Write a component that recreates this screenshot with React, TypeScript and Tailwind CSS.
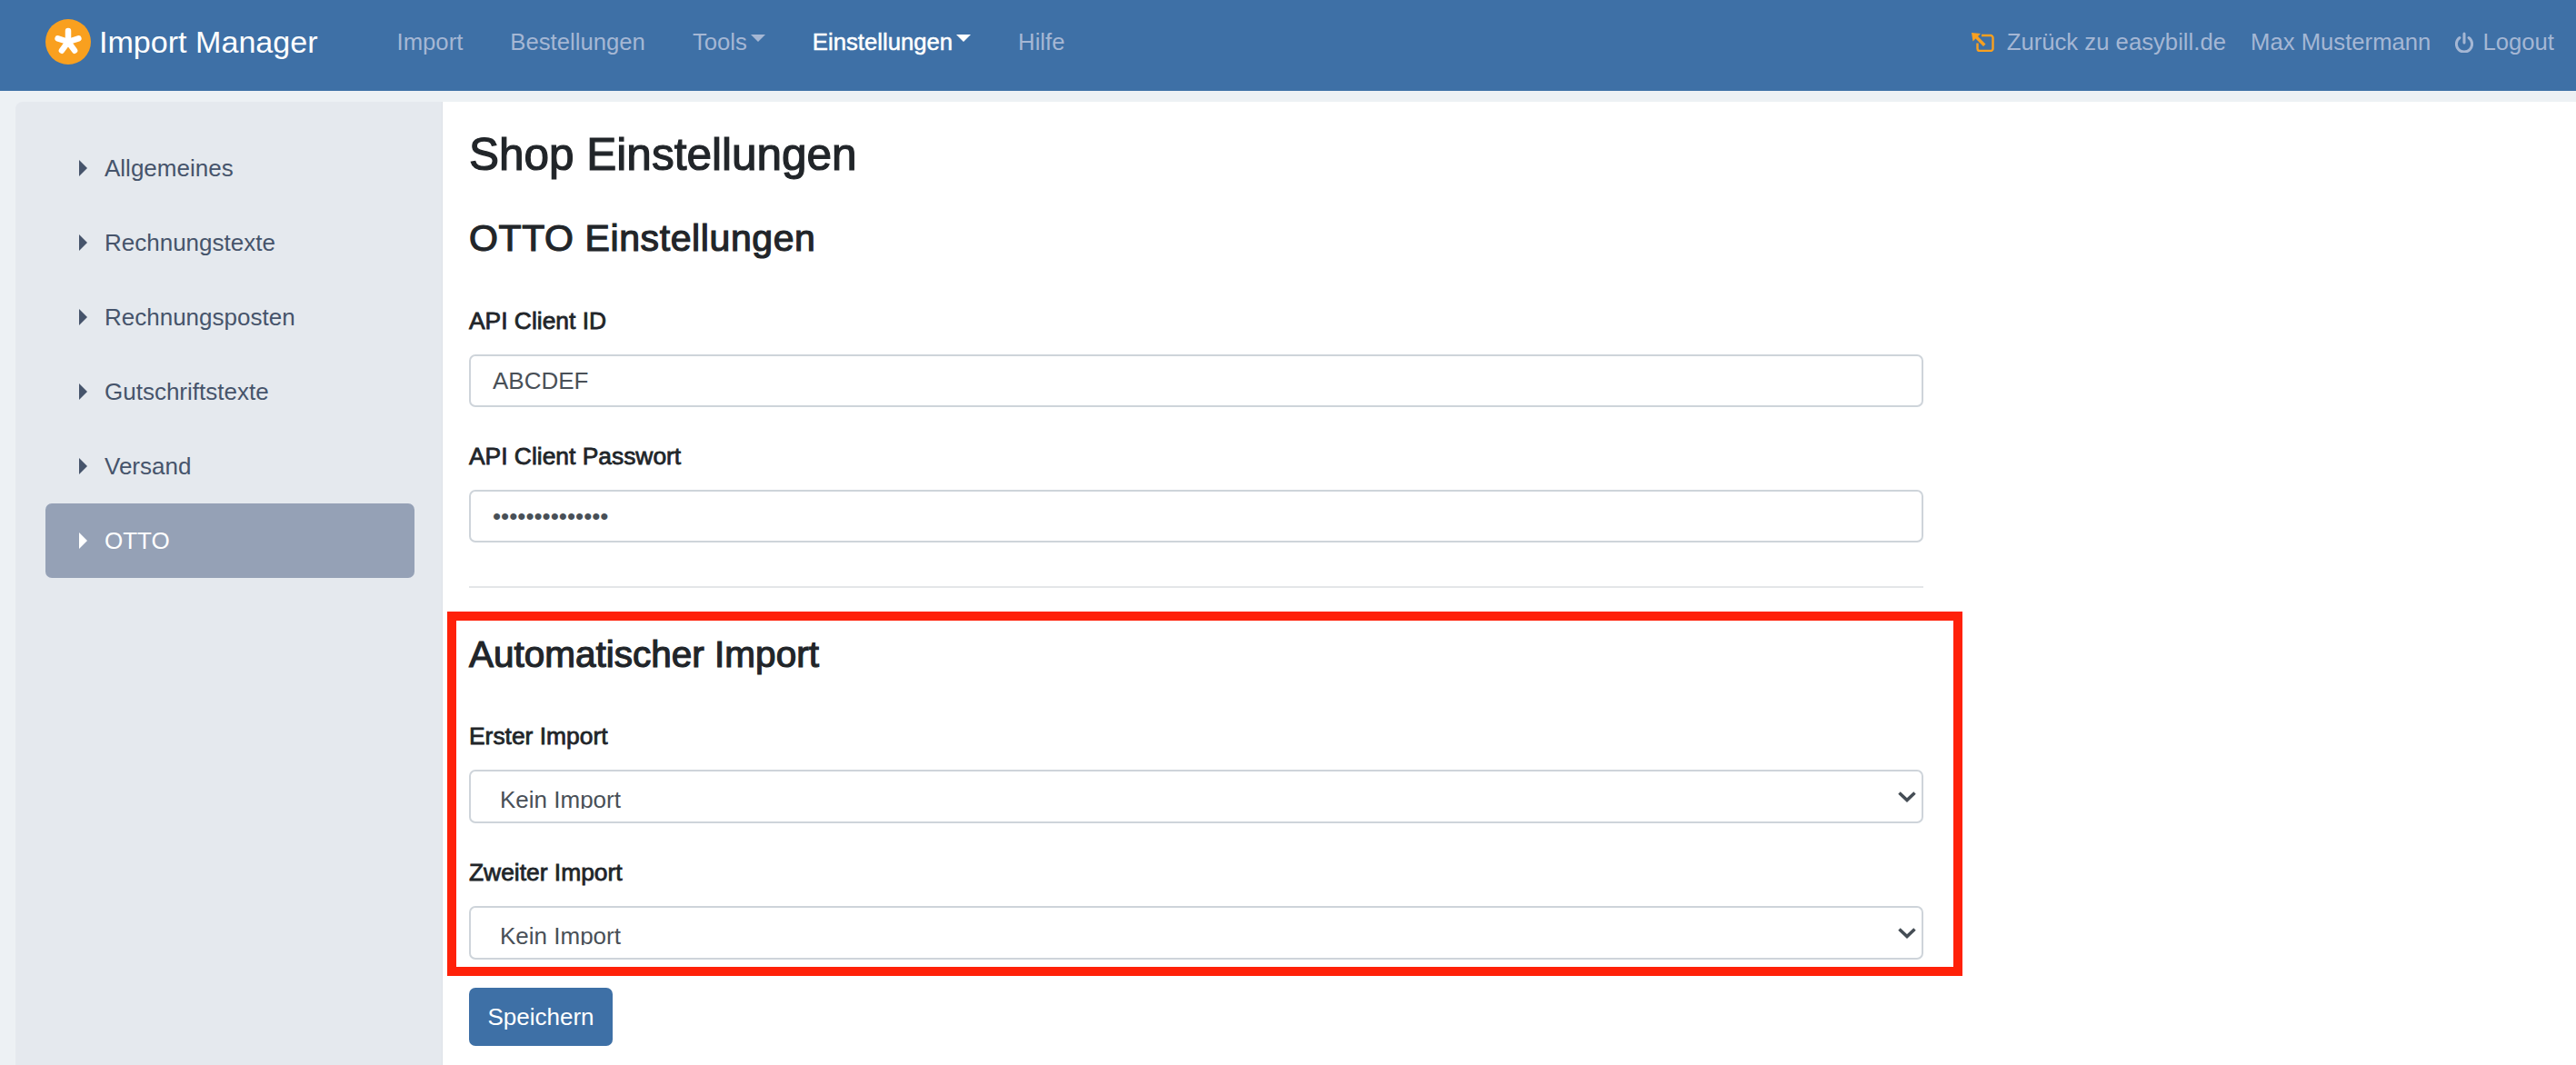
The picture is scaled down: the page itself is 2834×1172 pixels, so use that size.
const font = "font-['Liberation_Sans',Arial,sans-serif]";
const medium = "[-webkit-text-stroke:0.8px_currentColor]";
const heading = "[-webkit-text-stroke:1.2px_currentColor]";

const sideItems = ["Allgemeines", "Rechnungstexte", "Rechnungsposten", "Gutschriftstexte", "Versand", "OTTO"];

function Logo() {
  return (
    <svg viewBox="0 0 50 50" className="w-[50px] h-[50px] shrink-0">
      <circle cx="25" cy="25" r="25" fill="#f9a01f" />
      <g stroke="#fff" strokeWidth="6.5" strokeLinecap="round">
        <path d="M25 25V13" />
        <path d="M25 25V13" transform="rotate(72 25 25)" />
        <path d="M25 25V13" transform="rotate(144 25 25)" />
        <path d="M25 25V13" transform="rotate(216 25 25)" />
        <path d="M25 25V13" transform="rotate(288 25 25)" />
      </g>
    </svg>
  );
}

function BackIcon() {
  return (
    <svg viewBox="0 0 25 21" className="w-[25px] h-[21px] shrink-0" fill="none">
      <path d="M11 3h10a2.500 2.500 0 0 1 2.500 2.500v12a2.500 2.500 0 0 1-2.500 2.500H9a2.500 2.500 0 0 1-2.500-2.500v-6" stroke="#f9a01f" strokeWidth="2.400" />
      <path d="M0 0l10 1-3 3 8.500 8.500-2.500 2.500-8.500-8.500-3 3z" fill="#f9a01f" />
    </svg>
  );
}

function PowerIcon() {
  return (
    <svg viewBox="0 0 20 23" className="ml-[27px] w-[20px] h-[23px] shrink-0" fill="none" stroke="#a5b7d4" strokeWidth="3" strokeLinecap="round">
      <path d="M10 2v10" />
      <path d="M5 6.500a8.600 8.600 0 1 0 10 0" />
    </svg>
  );
}

function Caret() {
  return <span className="ml-[4px] mt-[-8px] w-0 h-0 border-x-[8px] border-x-transparent border-t-[8px] border-t-current" />;
}

function Field({ label, children, className }: { label: string; children: React.ReactNode; className?: string }) {
  return (
    <div className={className}>
      <label className={`block text-[26.4px] leading-[39px] text-[#212529] ${medium}`}>{label}</label>
      <div className="mt-[17px]">{children}</div>
    </div>
  );
}

function TextInput({ value, type = "text" }: { value: string; type?: string }) {
  return (
    <input
      readOnly
      type={type}
      value={value}
      className="block w-full h-[58px] px-[24px] text-[26px] text-[#495057] bg-white border-2 border-[#ced4da] rounded-[7px] outline-none"
    />
  );
}

function SelectBox() {
  return (
    <div className="relative">
      <select className="block w-full h-[59px] appearance-none pl-[32px] pr-[50px] pt-[12px] pb-[14px] text-[26px] text-[#495057] bg-white border-2 border-[#ced4da] rounded-[7px] outline-none">
        <option>Kein Import</option>
      </select>
      <svg viewBox="0 0 20 14" className="absolute right-[8px] top-[23px] w-[20px] h-[14px] pointer-events-none" fill="none" stroke="#454d55" strokeWidth="3.600">
        <path d="M1.500 2.500l8.500 8 8.500-8" />
      </svg>
    </div>
  );
}

export default function App() {
  return (
    <div className={`${font} h-[1172px] overflow-hidden bg-[#edf1f4] flex flex-col`}>
      <nav className="h-[100px] shrink-0 bg-[#3e70a6] flex items-center pl-[50px] pr-[24px] pb-[7px] text-[25.7px] text-[#a5b7d4]">
        <a className="flex items-center">
          <Logo />
          <span className="ml-[9px] text-[34.1px] text-white">Import Manager</span>
        </a>
        <div className="ml-[87px] flex items-center gap-[52px]">
          <a>Import</a>
          <a>Bestellungen</a>
          <a className="flex items-center">Tools<Caret /></a>
          <a className="flex items-center text-white [-webkit-text-stroke:0.5px_currentColor]">Einstellungen<Caret /></a>
          <a>Hilfe</a>
        </div>
        <div className="ml-auto flex items-center">
          <BackIcon />
          <a className="ml-[14px]">Zurück zu easybill.de</a>
          <a className="ml-[27px]">Max Mustermann</a>
          <PowerIcon />
          <a className="ml-[10px]">Logout</a>
        </div>
      </nav>
      <div className="flex-1 mt-[12px] ml-[17px] flex">
        <aside className="w-[470px] shrink-0 bg-[#e5e9ee] rounded-tl-[8px] border-r border-[#dde1e7] pl-[33px] pr-[30px] pt-[32px]">
          {sideItems.map((item) => (
            <a
              key={item}
              className={`flex items-center h-[82px] pl-[37px] rounded-[7px] text-[26px] ${item === "OTTO" ? "bg-[#95a1b6] text-white" : "text-[#46546b]"}`}
            >
              <span className="w-0 h-0 border-y-[9px] border-y-transparent border-l-[9px] border-l-current" />
              <span className="ml-[19px]">{item}</span>
            </a>
          ))}
        </aside>
        <main className="flex-1 bg-white pl-[29px] pt-[28px]">
          <div className="w-[1600px]">
            <h1 className={`text-[49.5px] leading-[60px] text-[#212529] ${heading}`}>Shop Einstellungen</h1>
            <h2 className={`mt-[38px] text-[41px] tracking-[0.6px] leading-[48px] text-[#212529] ${heading}`}>OTTO Einstellungen</h2>
            <Field label="API Client ID" className="mt-[48px]">
              <TextInput value="ABCDEF" />
            </Field>
            <Field label="API Client Passwort" className="mt-[35px]">
              <TextInput value="ABCDEFGHIJKLMN" type="password" />
            </Field>
            <hr className="mt-[48px] border-t-2 border-[#e4e6e8]" />
            <section className="relative mt-[49px]">
              <div className="absolute left-[-24px] right-[-43px] top-[-23px] h-[401px] border-[10px] border-[#ff2109] pointer-events-none" />
              <h2 className={`text-[40.5px] leading-[48px] text-[#212529] ${heading}`}>Automatischer Import</h2>
              <Field label="Erster Import" className="mt-[47px]">
                <SelectBox />
              </Field>
              <Field label="Zweiter Import" className="mt-[35px]">
                <SelectBox />
              </Field>
            </section>
            <button className="mt-[31px] block w-[158px] h-[64px] bg-[#3e70a6] text-white text-[26px] rounded-[7px]">Speichern</button>
          </div>
        </main>
      </div>
    </div>
  );
}
